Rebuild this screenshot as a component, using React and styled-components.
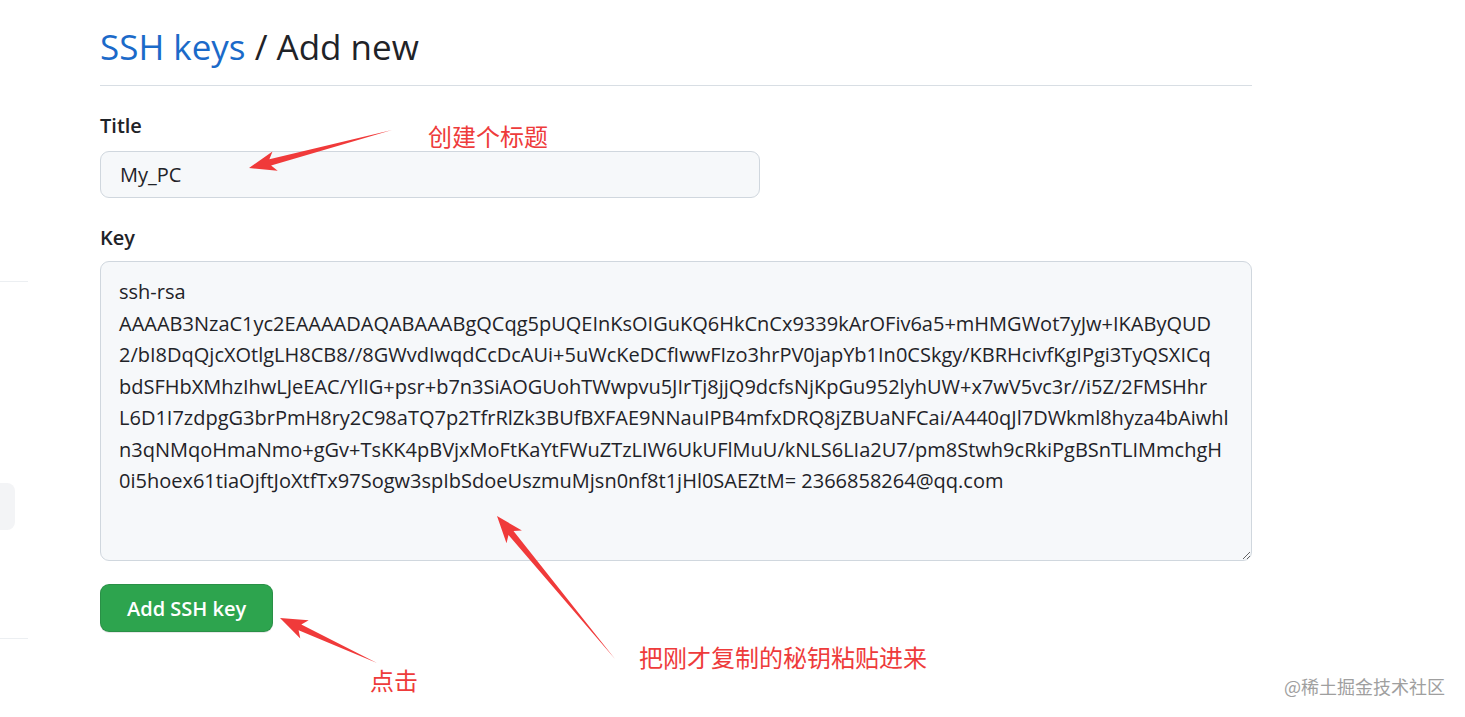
import React from "react";
import styled, { createGlobalStyle } from "styled-components";

const Global = createGlobalStyle`
  html, body { margin: 0; padding: 0; background: #ffffff; }
  body { font-family: "Open Sans", "Noto Sans", "Liberation Sans", sans-serif; color: #1f2328; }
  * { box-sizing: border-box; }
`;

const Page = styled.div`
  position: relative;
  width: 1465px;
  height: 717px;
  overflow: hidden;
  display: flex;
  align-items: flex-start;
`;

const Sidebar = styled.aside`
  width: 28px;
  flex: 0 0 28px;
  display: flex;
  flex-direction: column;
  padding-top: 281px;
`;

const RailLine = styled.div`
  height: 1px;
  background: #eceff2;
  margin-top: ${(p) => p.$gap || 0}px;
`;

const RailItem = styled.div`
  width: 15px;
  height: 47px;
  margin-top: 201px;
  background: #f3f4f6;
  border-radius: 0 8px 8px 0;
`;

const Main = styled.main`
  margin-left: 72px;
  width: 1152px;
  display: flex;
  flex-direction: column;
`;

const Heading = styled.h2`
  margin: 0;
  padding: 24px 0 15px;
  border-bottom: 1px solid #d8dee4;
  font-size: 35px;
  font-weight: 400;
  line-height: 46px;
  color: #1f2328;
`;

const Crumb = styled.a`
  color: #1b6ac9;
  text-decoration: none;
`;

const Form = styled.form`
  display: flex;
  flex-direction: column;
  padding-top: 26px;
`;

const Group = styled.div`
  display: flex;
  flex-direction: column;
  margin-bottom: ${(p) => p.$mb || 0}px;
`;

const Label = styled.label`
  font-size: 20px;
  font-weight: 600;
  line-height: 28px;
  margin-bottom: ${(p) => p.$mb || 11}px;
  color: #1f2328;
`;

const TextInput = styled.input`
  width: 660px;
  height: 47px;
  padding: 0 19px;
  font-family: inherit;
  font-size: 20px;
  color: #1f2328;
  background: #f6f8fa;
  border: 1px solid #d0d7de;
  border-radius: 9px;
  outline: none;
`;

const KeyArea = styled.textarea`
  width: 1152px;
  height: 300px;
  padding: 14px 18px;
  font-family: inherit;
  font-size: 20px;
  line-height: 31.5px;
  color: #1f2328;
  background: #f6f8fa;
  border: 1px solid #d0d7de;
  border-radius: 9px;
  outline: none;
  white-space: pre;
  overflow: hidden;
  resize: vertical;
`;

const SubmitButton = styled.button`
  align-self: flex-start;
  height: 48px;
  padding: 0 26px;
  font-family: inherit;
  font-size: 20px;
  font-weight: 600;
  color: #ffffff;
  background: #2da44e;
  border: 1px solid rgba(27, 31, 36, 0.15);
  border-radius: 9px;
  box-shadow: 0 1px 0 rgba(27, 31, 36, 0.1);
`;

const Overlay = styled.svg`
  position: absolute;
  left: 0;
  top: 0;
  pointer-events: none;
`;

const Note = styled.span`
  position: absolute;
  left: ${(p) => p.$x}px;
  top: ${(p) => p.$y}px;
  font-family: "Noto Sans CJK SC", sans-serif;
  font-size: 24px;
  line-height: 24px;
  color: #ee3b3b;
  white-space: nowrap;
`;

const Watermark = styled.span`
  position: absolute;
  right: 20px;
  bottom: 21px;
  font-family: "Noto Sans CJK SC", sans-serif;
  font-size: 18px;
  line-height: 20px;
  color: #8f8f8f;
  opacity: 0.85;
  white-space: nowrap;
`;

const KEY_LINES = [
  "ssh-rsa",
  "AAAAB3NzaC1yc2EAAAADAQABAAABgQCqg5pUQEInKsOIGuKQ6HkCnCx9339kArOFiv6a5+mHMGWot7yJw+IKAByQUD",
  "2/bI8DqQjcXOtlgLH8CB8//8GWvdIwqdCcDcAUi+5uWcKeDCfIwwFIzo3hrPV0japYb1In0CSkgy/KBRHcivfKgIPgi3TyQSXICq",
  "bdSFHbXMhzIhwLJeEAC/YlIG+psr+b7n3SiAOGUohTWwpvu5JIrTj8jjQ9dcfsNjKpGu952lyhUW+x7wV5vc3r//i5Z/2FMSHhr",
  "L6D1I7zdpgG3brPmH8ry2C98aTQ7p2TfrRlZk3BUfBXFAE9NNauIPB4mfxDRQ8jZBUaNFCai/A440qJl7DWkml8hyza4bAiwhl",
  "n3qNMqoHmaNmo+gGv+TsKK4pBVjxMoFtKaYtFWuZTzLIW6UkUFlMuU/kNLS6LIa2U7/pm8Stwh9cRkiPgBSnTLIMmchgH",
  "0i5hoex61tiaOjftJoXtfTx97Sogw3spIbSdoeUszmuMjsn0nf8t1jHl0SAEZtM= 2366858264@qq.com",
];

function arrowPoints(tx, ty, hx, hy) {
  const dx = hx - tx;
  const dy = hy - ty;
  const len = Math.hypot(dx, dy);
  const ux = dx / len;
  const uy = dy / len;
  const nx = -uy;
  const ny = ux;
  const L = 22;
  const bx = hx - ux * L;
  const by = hy - uy * L;
  const sw = 3.2;
  const bw = 10;
  const back = 5;
  const pts = [
    [tx, ty],
    [bx + nx * sw, by + ny * sw],
    [bx - ux * back + nx * bw, by - uy * back + ny * bw],
    [hx, hy],
    [bx - ux * back - nx * bw, by - uy * back - ny * bw],
    [bx - nx * sw, by - ny * sw],
  ];
  return pts.map((p) => p.map((v) => v.toFixed(1)).join(",")).join(" ");
}

function Arrow({ from, to }) {
  return <polygon points={arrowPoints(from[0], from[1], to[0], to[1])} fill="#f03a3a" />;
}

export default function App() {
  return (
    <>
      <Global />
      <Page>
        <Sidebar>
          <RailLine />
          <RailItem />
          <RailLine $gap={108} />
        </Sidebar>
        <Main>
          <Heading>
            <Crumb href="#">SSH keys</Crumb> / Add new
          </Heading>
          <Form onSubmit={(e) => e.preventDefault()}>
            <Group $mb={26}>
              <Label htmlFor="title">Title</Label>
              <TextInput id="title" defaultValue="My_PC" />
            </Group>
            <Group $mb={23}>
              <Label htmlFor="key" $mb={9}>Key</Label>
              <KeyArea id="key" defaultValue={KEY_LINES.join("\n")} spellCheck={false} />
            </Group>
            <SubmitButton type="submit">Add SSH key</SubmitButton>
          </Form>
        </Main>

        <Overlay width="1465" height="717" viewBox="0 0 1465 717">
          <Arrow from={[392, 130]} to={[249, 168]} />
          <Arrow from={[615, 659]} to={[497, 516]} />
          <Arrow from={[377, 663]} to={[280, 618]} />
        </Overlay>
        <Note $x={428} $y={124}>创建个标题</Note>
        <Note $x={639} $y={645}>把刚才复制的秘钥粘贴进来</Note>
        <Note $x={370} $y={668}>点击</Note>
        <Watermark>@稀土掘金技术社区</Watermark>
      </Page>
    </>
  );
}
